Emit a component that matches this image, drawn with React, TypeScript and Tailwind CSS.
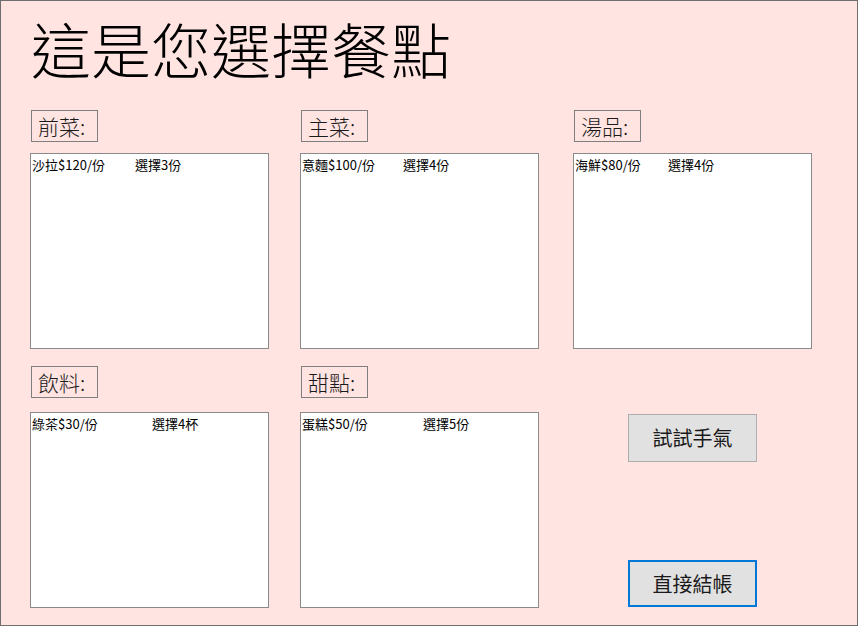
import React from 'react';

interface Item {
  name: string;
  price: string;
  pick: string;
  gap: string;
}

const CJK = { fontFamily: '"Noto Sans CJK TC", "Noto Sans", sans-serif' };

const Label: React.FC<{ text: string }> = ({ text }) => (
  <div className="ml-[1px] flex h-[32px] w-[67px] items-center border border-[#7f7f7f] pl-[6px] text-[21px] font-light leading-none text-[#1a1a1a]">
    {text}
  </div>
);

const ListBox: React.FC<{ item: Item; top: string }> = ({ item, top }) => (
  <div className={`${top} h-[196px] w-[239px] border border-[#8a8a8a] bg-white pl-[1px] pt-[2px] text-[13px] leading-[17px] text-black`}>
    <div className="flex whitespace-nowrap">
      <span className={`inline-block ${item.gap}`}>
        {item.name}${item.price}/份
      </span>
      <span>{item.pick}</span>
    </div>
  </div>
);

const Column: React.FC<{ label: string; item: Item; listTop: string; className?: string }> = ({
  label,
  item,
  listTop,
  className = '',
}) => (
  <div className={`flex w-[239px] flex-col ${className}`}>
    <Label text={label} />
    <ListBox item={item} top={listTop} />
  </div>
);

export default function App() {
  return (
    <div
      className="h-[626px] w-[858px] overflow-hidden border border-[#6e6e6e] bg-[#ffe4e1] text-black"
      style={CJK}
    >
      <h1 className="ml-[30px] mt-[17px] text-[60px] font-light leading-none">這是您選擇餐點</h1>

      {/* Row 1 */}
      <div className="mt-[32px] flex pl-[29px]">
        <Column
          label="前菜:"
          listTop="mt-[11px]"
          item={{ name: '沙拉', price: '120', pick: '選擇3份', gap: 'w-[103px]' }}
        />
        <Column
          className="ml-[31px]"
          label="主菜:"
          listTop="mt-[11px]"
          item={{ name: '意麵', price: '100', pick: '選擇4份', gap: 'w-[101px]' }}
        />
        <Column
          className="ml-[34px]"
          label="湯品:"
          listTop="mt-[11px]"
          item={{ name: '海鮮', price: '80', pick: '選擇4份', gap: 'w-[93px]' }}
        />
      </div>

      {/* Row 2 */}
      <div className="mt-[17px] flex pl-[29px]">
        <Column
          label="飲料:"
          listTop="mt-[14px]"
          item={{ name: '綠茶', price: '30', pick: '選擇4杯', gap: 'w-[120px]' }}
        />
        <Column
          className="ml-[31px]"
          label="甜點:"
          listTop="mt-[14px]"
          item={{ name: '蛋糕', price: '50', pick: '選擇5份', gap: 'w-[121px]' }}
        />
        <div className="ml-[89px] flex flex-col pt-[48px]">
          <button className="flex h-[48px] w-[129px] items-center justify-center border border-[#adadad] bg-[#e1e1e1] text-[20px] leading-none text-[#1a1a1a]">
            試試手氣
          </button>
          <button className="mt-[98px] flex h-[47px] w-[129px] items-center justify-center border-2 border-[#0078d7] bg-[#e1e1e1] text-[20px] leading-none text-[#1a1a1a]">
            直接結帳
          </button>
        </div>
      </div>
    </div>
  );
}
